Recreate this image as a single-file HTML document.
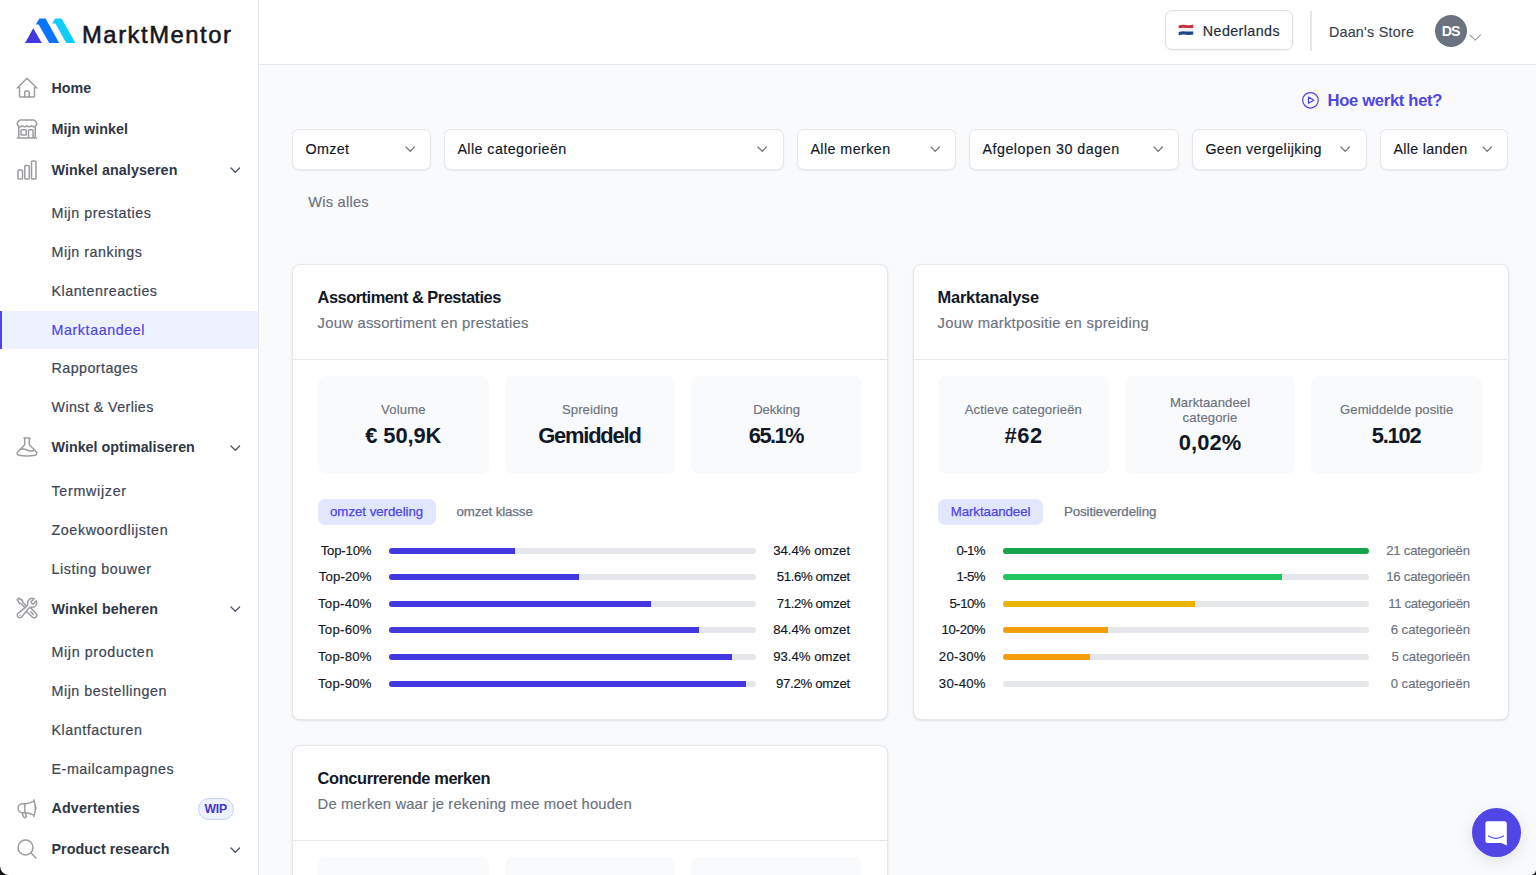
<!DOCTYPE html>
<html><head><meta charset="utf-8"><title>MarktMentor</title>
<style>
html,body{margin:0;padding:0}
body{width:1536px;height:875px;overflow:hidden;position:relative;background:#f9fafb;font-family:'Liberation Sans',sans-serif;}
.t{position:absolute;line-height:1;white-space:nowrap}
.t.n{-webkit-text-stroke-width:0.15px}
.r{position:absolute;box-sizing:border-box}
</style></head><body>

<div class="r" style="left:0px;top:0px;width:259px;height:875px;background:#fff;border-right:1px solid #e5e7eb"></div>
<svg class="r" style="left:20px;top:14px" width="62" height="34" viewBox="20 14 62 34">
<polygon points="25,43 33.3,28.3 41.8,43" fill="#4338e0"/>
<polygon points="39.3,18.6 45.6,18.6 59.2,43 49.2,43 38.6,24.6 35.8,24.6" fill="#0b74ff"/>
<polygon points="55.1,18.6 61.6,18.6 75.4,43 66.2,43 55.4,23.6 52.2,23.6" fill="#0fcdfd"/>
</svg>
<div class="t" style="left:82.00px;top:22.77px;font-size:23.8px;color:#15171c;letter-spacing:1.542px;-webkit-text-stroke:0.55px #15171c;">MarktMentor</div>
<svg class="r" style="left:14.7px;top:76px" width="24" height="24" viewBox="0 0 24 24" fill="none" stroke="#9b9ca1" stroke-width="1.5" stroke-linecap="round" stroke-linejoin="round"><path d="m2.25 12 8.954-8.955c.44-.439 1.152-.439 1.591 0L21.75 12M4.5 9.75v10.125c0 .621.504 1.125 1.125 1.125H9.75v-4.875c0-.621.504-1.125 1.125-1.125h2.25c.621 0 1.125.504 1.125 1.125V21h4.125c.621 0 1.125-.504 1.125-1.125V9.75M8.25 21h8.25"/></svg>
<div class="t" style="left:51.50px;top:80.64px;font-size:14.3px;color:#2f3745;font-weight:700;letter-spacing:-0.006px;">Home</div>
<svg class="r" style="left:14.7px;top:116.5px" width="24" height="24" viewBox="0 0 24 24" fill="none" stroke="#9b9ca1" stroke-width="1.5" stroke-linecap="round" stroke-linejoin="round"><path d="M13.5 21v-7.5a.75.75 0 0 1 .75-.75h3a.75.75 0 0 1 .75.75V21m-4.5 0H2.36m11.14 0H18m0 0h3.64m-1.39 0V9.349M3.75 21V9.349m0 0a3.001 3.001 0 0 0 3.75-.615A2.993 2.993 0 0 0 9.75 9.75c.896 0 1.7-.393 2.25-1.016a2.993 2.993 0 0 0 2.25 1.016c.896 0 1.7-.393 2.25-1.015a3.001 3.001 0 0 0 3.75.614m-16.5 0a3.004 3.004 0 0 1-.621-4.72l1.189-1.19A1.5 1.5 0 0 1 5.378 3h13.243a1.5 1.5 0 0 1 1.06.44l1.19 1.189a3 3 0 0 1-.621 4.72M6.75 18h3.75a.75.75 0 0 0 .75-.75V13.5a.75.75 0 0 0-.75-.75H6.75a.75.75 0 0 0-.75.75v3.75c0 .414.336.75.75.75Z"/></svg>
<div class="t" style="left:51.50px;top:121.84px;font-size:14.3px;color:#2f3745;font-weight:700;letter-spacing:0.011px;">Mijn winkel</div>
<svg class="r" style="left:14.7px;top:157.5px" width="24" height="24" viewBox="0 0 24 24" fill="none" stroke="#9b9ca1" stroke-width="1.5" stroke-linecap="round" stroke-linejoin="round"><path d="M3 13.125C3 12.504 3.504 12 4.125 12h2.25c.621 0 1.125.504 1.125 1.125v6.75C7.5 20.496 6.996 21 6.375 21h-2.25A1.125 1.125 0 0 1 3 19.875v-6.75ZM9.75 8.625c0-.621.504-1.125 1.125-1.125h2.25c.621 0 1.125.504 1.125 1.125v11.25c0 .621-.504 1.125-1.125 1.125h-2.25a1.125 1.125 0 0 1-1.125-1.125V8.625ZM16.5 4.125c0-.621.504-1.125 1.125-1.125h2.25C20.496 3 21 3.504 21 4.125v15.75c0 .621-.504 1.125-1.125 1.125h-2.25a1.125 1.125 0 0 1-1.125-1.125V4.125Z"/></svg>
<div class="t" style="left:51.50px;top:162.54px;font-size:14.3px;color:#2f3745;font-weight:700;letter-spacing:0.077px;">Winkel analyseren</div>
<svg class="r" style="left:229.45px;top:166.15px" width="12.6" height="8.3" viewBox="-2 -2 12.6 8.3" fill="none" stroke="#4b5563" stroke-width="1.3" stroke-linecap="round" stroke-linejoin="round"><path d="M0 0 L4.3 4.3 L8.6 0"/></svg>
<svg class="r" style="left:14.7px;top:435px" width="24" height="24" viewBox="0 0 24 24" fill="none" stroke="#9b9ca1" stroke-width="1.5" stroke-linecap="round" stroke-linejoin="round"><path d="M9.75 3.104v5.714a2.25 2.25 0 0 1-.659 1.591L5 14.5M9.75 3.104c-.251.023-.501.05-.75.082m.75-.082a24.301 24.301 0 0 1 4.5 0m0 0v5.714c0 .597.237 1.17.659 1.591L19.8 15.3M14.25 3.104c.251.023.501.05.75.082M19.8 15.3l-1.57.393A9.065 9.065 0 0 1 12 15a9.065 9.065 0 0 0-6.23-.693L5 14.5m14.8.8 1.402 1.402c1.232 1.232.65 3.318-1.067 3.611A48.309 48.309 0 0 1 12 21c-2.773 0-5.491-.235-8.135-.687-1.718-.293-2.3-2.379-1.067-3.61L5 14.5"/></svg>
<div class="t" style="left:51.50px;top:439.85px;font-size:14.3px;color:#2f3745;font-weight:700;letter-spacing:0.025px;">Winkel optimaliseren</div>
<svg class="r" style="left:229.45px;top:443.75px" width="12.6" height="8.3" viewBox="-2 -2 12.6 8.3" fill="none" stroke="#4b5563" stroke-width="1.3" stroke-linecap="round" stroke-linejoin="round"><path d="M0 0 L4.3 4.3 L8.6 0"/></svg>
<svg class="r" style="left:14.7px;top:595.5px" width="24" height="24" viewBox="0 0 24 24" fill="none" stroke="#9b9ca1" stroke-width="1.5" stroke-linecap="round" stroke-linejoin="round"><path d="M11.42 15.17 17.25 21A2.652 2.652 0 0 0 21 17.25l-5.877-5.877M11.42 15.17l2.496-3.03c.317-.384.74-.626 1.208-.766M11.42 15.17l-4.655 5.653a2.548 2.548 0 1 1-3.586-3.586l6.837-5.63m5.108-.233c.55-.164 1.163-.188 1.743-.14a4.5 4.5 0 0 0 4.486-6.336l-3.276 3.277a3.004 3.004 0 0 1-2.25-2.25l3.276-3.276a4.5 4.5 0 0 0-6.336 4.486c.091 1.076-.071 2.264-.904 2.95l-.102.085m-1.745 1.437L5.909 7.5H4.5L2.25 3.75l1.5-1.5L7.5 4.5v1.409l4.26 4.26m-1.745 1.437 1.745-1.437m6.615 8.206L15.75 15.75M4.867 19.125h.008v.008h-.008v-.008Z"/></svg>
<div class="t" style="left:51.50px;top:601.75px;font-size:14.3px;color:#2f3745;font-weight:700;letter-spacing:0.072px;">Winkel beheren</div>
<svg class="r" style="left:229.45px;top:604.95px" width="12.6" height="8.3" viewBox="-2 -2 12.6 8.3" fill="none" stroke="#4b5563" stroke-width="1.3" stroke-linecap="round" stroke-linejoin="round"><path d="M0 0 L4.3 4.3 L8.6 0"/></svg>
<svg class="r" style="left:14.7px;top:797px" width="24" height="24" viewBox="0 0 24 24" fill="none" stroke="#9b9ca1" stroke-width="1.5" stroke-linecap="round" stroke-linejoin="round"><path d="M10.34 15.84c-.688-.06-1.386-.09-2.09-.09H7.5a4.5 4.5 0 1 1 0-9h.75c.704 0 1.402-.03 2.09-.09m0 9.18c.253.962.584 1.892.985 2.783.247.55.06 1.21-.463 1.511l-.657.38c-.551.318-1.26.117-1.527-.461a20.845 20.845 0 0 1-1.44-4.282m3.102.069a18.03 18.03 0 0 1-.59-4.59c0-1.586.205-3.124.59-4.59m0 9.18a23.848 23.848 0 0 1 8.835 2.535M10.34 6.66a23.847 23.847 0 0 0 8.835-2.535m0 0A23.74 23.74 0 0 0 18.795 3m.38 1.125a23.91 23.91 0 0 1 1.014 5.395m-1.014 8.855c-.118.38-.245.754-.38 1.125m.38-1.125a23.91 23.91 0 0 0 1.014-5.395m0-3.46c.495.413.811 1.035.811 1.73 0 .695-.316 1.317-.811 1.73m0-3.46a24.347 24.347 0 0 1 0 3.46"/></svg>
<div class="t" style="left:51.50px;top:801.14px;font-size:14.3px;color:#2f3745;font-weight:700;letter-spacing:0.134px;">Advertenties</div>
<div class="r" style="left:198px;top:798px;width:36px;height:22px;background:#eef2ff;border:1px solid #c7d2fe;border-radius:11px"></div>
<div class="t" style="left:204.40px;top:802.53px;font-size:12.2px;color:#4338ca;font-weight:700;letter-spacing:-0.114px;">WIP</div>
<svg class="r" style="left:14.7px;top:837.3px" width="24" height="24" viewBox="0 0 24 24" fill="none" stroke="#9b9ca1" stroke-width="1.5" stroke-linecap="round" stroke-linejoin="round"><path d="m21 21-5.197-5.197m0 0A7.5 7.5 0 1 0 5.196 5.196a7.5 7.5 0 0 0 10.607 10.607Z"/></svg>
<div class="t" style="left:51.50px;top:842.05px;font-size:14.3px;color:#2f3745;font-weight:700;letter-spacing:0.025px;">Product research</div>
<svg class="r" style="left:229.45px;top:845.85px" width="12.6" height="8.3" viewBox="-2 -2 12.6 8.3" fill="none" stroke="#4b5563" stroke-width="1.3" stroke-linecap="round" stroke-linejoin="round"><path d="M0 0 L4.3 4.3 L8.6 0"/></svg>
<div class="r" style="left:0px;top:310.5px;width:258px;height:38.5px;background:#eef2ff"></div>
<div class="r" style="left:0px;top:310.5px;width:2px;height:38.5px;background:#4f46e5"></div>
<div class="t" style="left:51.50px;top:206.44px;font-size:14.3px;color:#3d4654;letter-spacing:0.514px;-webkit-text-stroke:0.2px #3d4654;">Mijn prestaties</div>
<div class="t" style="left:51.50px;top:245.04px;font-size:14.3px;color:#3d4654;letter-spacing:0.520px;-webkit-text-stroke:0.2px #3d4654;">Mijn rankings</div>
<div class="t" style="left:51.50px;top:283.85px;font-size:14.3px;color:#3d4654;letter-spacing:0.496px;-webkit-text-stroke:0.2px #3d4654;">Klantenreacties</div>
<div class="t" style="left:51.50px;top:322.75px;font-size:14.3px;color:#4f46e5;letter-spacing:0.577px;-webkit-text-stroke:0.2px #4f46e5;">Marktaandeel</div>
<div class="t" style="left:51.50px;top:361.45px;font-size:14.3px;color:#3d4654;letter-spacing:0.440px;-webkit-text-stroke:0.2px #3d4654;">Rapportages</div>
<div class="t" style="left:51.50px;top:399.85px;font-size:14.3px;color:#3d4654;letter-spacing:0.409px;-webkit-text-stroke:0.2px #3d4654;">Winst &amp; Verlies</div>
<div class="t" style="left:51.50px;top:483.75px;font-size:14.3px;color:#3d4654;letter-spacing:0.698px;-webkit-text-stroke:0.2px #3d4654;">Termwijzer</div>
<div class="t" style="left:51.50px;top:522.85px;font-size:14.3px;color:#3d4654;letter-spacing:0.588px;-webkit-text-stroke:0.2px #3d4654;">Zoekwoordlijsten</div>
<div class="t" style="left:51.50px;top:561.95px;font-size:14.3px;color:#3d4654;letter-spacing:0.554px;-webkit-text-stroke:0.2px #3d4654;">Listing bouwer</div>
<div class="t" style="left:51.50px;top:645.45px;font-size:14.3px;color:#3d4654;letter-spacing:0.622px;-webkit-text-stroke:0.2px #3d4654;">Mijn producten</div>
<div class="t" style="left:51.50px;top:684.25px;font-size:14.3px;color:#3d4654;letter-spacing:0.529px;-webkit-text-stroke:0.2px #3d4654;">Mijn bestellingen</div>
<div class="t" style="left:51.50px;top:723.14px;font-size:14.3px;color:#3d4654;letter-spacing:0.520px;-webkit-text-stroke:0.2px #3d4654;">Klantfacturen</div>
<div class="t" style="left:51.50px;top:761.85px;font-size:14.3px;color:#3d4654;letter-spacing:0.547px;-webkit-text-stroke:0.2px #3d4654;">E-mailcampagnes</div>
<div class="r" style="left:259px;top:0px;width:1277px;height:65px;background:#fff;border-bottom:1px solid #e5e7eb"></div>
<div class="r" style="left:1165px;top:10.3px;width:128.3px;height:40px;background:#fff;border:1px solid #dcdfe4;border-radius:7px;box-shadow:0 1px 2px rgba(0,0,0,.05)"></div>
<svg class="r" style="left:1178px;top:24px" width="16" height="12" viewBox="0 0 16 12">
<path d="M0.7 1.6 Q4 0.2 8 1 T15.3 0.6 V4 Q12 4.6 8 4 T0.7 4.6Z" fill="#c8313e"/>
<path d="M0.7 4.6 Q4 3.6 8 4 T15.3 4 V7.4 Q12 8 8 7.4 T0.7 8Z" fill="#f4f4f4"/>
<path d="M0.7 8 Q4 7 8 7.4 T15.3 7.4 V10.6 Q12 11.4 8 10.8 T0.7 11.4Z" fill="#21468b"/>
</svg>
<div class="t n" style="left:1202.80px;top:23.64px;font-size:14.3px;color:#1f2937;letter-spacing:0.406px;">Nederlands</div>
<div class="r" style="left:1310px;top:10.5px;width:2px;height:40px;background:#e5e7eb"></div>
<div class="t n" style="left:1328.90px;top:25.45px;font-size:14.3px;color:#374151;letter-spacing:0.252px;">Daan's Store</div>
<div class="r" style="left:1435.4px;top:14.5px;width:32px;height:32px;background:#6b7280;border-radius:50%"></div>
<div class="t" style="left:1441.70px;top:23.93px;font-size:14.2px;color:#fff;font-weight:700;letter-spacing:-1.038px;">DS</div>
<svg class="r" style="left:1468.35px;top:32.8px" width="14.5" height="9.2" viewBox="-2 -2 14.5 9.2" fill="none" stroke="#9ca3af" stroke-width="1.1" stroke-linecap="round" stroke-linejoin="round"><path d="M0 0 L5.25 5.2 L10.5 0"/></svg>
<svg class="r" style="left:1300px;top:90px" width="22" height="22" viewBox="0 0 22 22" fill="none" stroke="#4f46e5" stroke-width="1.25" stroke-linecap="round" stroke-linejoin="round"><circle cx="10.45" cy="10.3" r="7.8"/><path d="M8.5 7.1V13.3L13.9 10.2Z"/></svg>
<div class="t" style="left:1327.50px;top:92.59px;font-size:16.6px;color:#4f46e5;font-weight:700;letter-spacing:-0.306px;">Hoe werkt het?</div>
<div class="r" style="left:292px;top:129px;width:139px;height:41px;background:#fff;border:1px solid #e5e7eb;border-radius:7px;box-shadow:0 1px 2px rgba(0,0,0,.06)"></div>
<div class="t n" style="left:305.40px;top:141.84px;font-size:14.3px;color:#111827;letter-spacing:0.372px;">Omzet</div>
<svg class="r" style="left:403.5px;top:145.04999999999998px" width="12.4" height="8.3" viewBox="-2 -2 12.4 8.3" fill="none" stroke="#6b7280" stroke-width="1.2" stroke-linecap="round" stroke-linejoin="round"><path d="M0 0 L4.2 4.3 L8.4 0"/></svg>
<div class="r" style="left:444px;top:129px;width:340px;height:41px;background:#fff;border:1px solid #e5e7eb;border-radius:7px;box-shadow:0 1px 2px rgba(0,0,0,.06)"></div>
<div class="t n" style="left:457.40px;top:141.84px;font-size:14.3px;color:#111827;letter-spacing:0.422px;">Alle categorieën</div>
<svg class="r" style="left:756.0999999999999px;top:145.04999999999998px" width="12.4" height="8.3" viewBox="-2 -2 12.4 8.3" fill="none" stroke="#6b7280" stroke-width="1.2" stroke-linecap="round" stroke-linejoin="round"><path d="M0 0 L4.2 4.3 L8.4 0"/></svg>
<div class="r" style="left:797px;top:129px;width:159px;height:41px;background:#fff;border:1px solid #e5e7eb;border-radius:7px;box-shadow:0 1px 2px rgba(0,0,0,.06)"></div>
<div class="t n" style="left:810.40px;top:141.84px;font-size:14.3px;color:#111827;letter-spacing:0.430px;">Alle merken</div>
<svg class="r" style="left:928.8px;top:145.04999999999998px" width="12.4" height="8.3" viewBox="-2 -2 12.4 8.3" fill="none" stroke="#6b7280" stroke-width="1.2" stroke-linecap="round" stroke-linejoin="round"><path d="M0 0 L4.2 4.3 L8.4 0"/></svg>
<div class="r" style="left:969px;top:129px;width:210px;height:41px;background:#fff;border:1px solid #e5e7eb;border-radius:7px;box-shadow:0 1px 2px rgba(0,0,0,.06)"></div>
<div class="t n" style="left:982.40px;top:141.84px;font-size:14.3px;color:#111827;letter-spacing:0.516px;">Afgelopen 30 dagen</div>
<svg class="r" style="left:1151.8px;top:145.04999999999998px" width="12.4" height="8.3" viewBox="-2 -2 12.4 8.3" fill="none" stroke="#6b7280" stroke-width="1.2" stroke-linecap="round" stroke-linejoin="round"><path d="M0 0 L4.2 4.3 L8.4 0"/></svg>
<div class="r" style="left:1192px;top:129px;width:175px;height:41px;background:#fff;border:1px solid #e5e7eb;border-radius:7px;box-shadow:0 1px 2px rgba(0,0,0,.06)"></div>
<div class="t n" style="left:1205.40px;top:141.84px;font-size:14.3px;color:#111827;letter-spacing:0.350px;">Geen vergelijking</div>
<svg class="r" style="left:1339.3px;top:145.04999999999998px" width="12.4" height="8.3" viewBox="-2 -2 12.4 8.3" fill="none" stroke="#6b7280" stroke-width="1.2" stroke-linecap="round" stroke-linejoin="round"><path d="M0 0 L4.2 4.3 L8.4 0"/></svg>
<div class="r" style="left:1380px;top:129px;width:128px;height:41px;background:#fff;border:1px solid #e5e7eb;border-radius:7px;box-shadow:0 1px 2px rgba(0,0,0,.06)"></div>
<div class="t n" style="left:1393.40px;top:141.84px;font-size:14.3px;color:#111827;letter-spacing:0.305px;">Alle landen</div>
<svg class="r" style="left:1480.8px;top:145.04999999999998px" width="12.4" height="8.3" viewBox="-2 -2 12.4 8.3" fill="none" stroke="#6b7280" stroke-width="1.2" stroke-linecap="round" stroke-linejoin="round"><path d="M0 0 L4.2 4.3 L8.4 0"/></svg>
<div class="t n" style="left:308.30px;top:194.79px;font-size:14.6px;color:#6b7280;letter-spacing:0.237px;">Wis alles</div>
<div class="r" style="left:292px;top:264px;width:596px;height:456px;background:#fff;border:1px solid #e5e7eb;border-radius:8px;box-shadow:0 1px 3px 0 rgba(0,0,0,.08),0 1px 2px -1px rgba(0,0,0,.08)"></div>
<div class="t" style="left:317.60px;top:288.76px;font-size:16.4px;color:#111827;font-weight:700;letter-spacing:-0.489px;">Assortiment &amp; Prestaties</div>
<div class="t n" style="left:317.60px;top:315.92px;font-size:14.8px;color:#6b7280;letter-spacing:0.234px;">Jouw assortiment en prestaties</div>
<div class="r" style="left:293px;top:359px;width:594px;height:1px;background:#e5e7eb"></div>
<div class="r" style="left:318px;top:376px;width:170.67px;height:98px;background:#f9fafb;border-radius:8px"></div>
<div class="t" style="left:381.08px;top:403.37px;font-size:13.1px;color:#6b7280;letter-spacing:0.162px;-webkit-text-stroke:0.15px #6b7280;">Volume</div>
<div class="t" style="left:365.20px;top:424.78px;font-size:21.9px;color:#111827;font-weight:700;letter-spacing:-0.076px;">€ 50,9K</div>
<div class="r" style="left:504.67px;top:376px;width:170.67px;height:98px;background:#f9fafb;border-radius:8px"></div>
<div class="t" style="left:562.00px;top:403.37px;font-size:13.1px;color:#6b7280;letter-spacing:0.082px;-webkit-text-stroke:0.15px #6b7280;">Spreiding</div>
<div class="t" style="left:538.15px;top:424.78px;font-size:21.9px;color:#111827;font-weight:700;letter-spacing:-1.184px;">Gemiddeld</div>
<div class="r" style="left:691.33px;top:376px;width:170.67px;height:98px;background:#f9fafb;border-radius:8px"></div>
<div class="t" style="left:753.21px;top:403.37px;font-size:13.1px;color:#6b7280;letter-spacing:-0.071px;-webkit-text-stroke:0.15px #6b7280;">Dekking</div>
<div class="t" style="left:748.86px;top:424.78px;font-size:21.9px;color:#111827;font-weight:700;letter-spacing:-1.622px;">65.1%</div>
<div class="r" style="left:318px;top:499px;width:118px;height:26px;background:#e0e7ff;border-radius:7px"></div>
<div class="t" style="left:330.00px;top:504.80px;font-size:13.3px;color:#4f46e5;letter-spacing:-0.043px;-webkit-text-stroke:0.25px #4f46e5;">omzet verdeling</div>
<div class="t" style="left:456.60px;top:504.80px;font-size:13.3px;color:#6b7280;letter-spacing:-0.128px;-webkit-text-stroke:0.25px #6b7280;">omzet klasse</div>
<div class="t n" style="left:320.70px;top:543.78px;font-size:13.2px;color:#111827;letter-spacing:-0.201px;">Top-10%</div>
<div class="r" style="left:389px;top:547.8px;width:367.4px;height:6px;background:#e5e7eb;border-radius:3px"></div>
<div class="r" style="left:389px;top:547.8px;width:126.39px;height:6px;background:#4338e0;border-radius:3px 0 0 3px"></div>
<div class="t n" style="left:773.20px;top:543.78px;font-size:13.2px;color:#111827;letter-spacing:-0.006px;">34.4% omzet</div>
<div class="t n" style="left:318.80px;top:570.33px;font-size:13.2px;color:#111827;letter-spacing:0.116px;">Top-20%</div>
<div class="r" style="left:389px;top:574.35px;width:367.4px;height:6px;background:#e5e7eb;border-radius:3px"></div>
<div class="r" style="left:389px;top:574.35px;width:189.58px;height:6px;background:#4338e0;border-radius:3px 0 0 3px"></div>
<div class="t n" style="left:776.70px;top:570.33px;font-size:13.2px;color:#111827;letter-spacing:-0.356px;">51.6% omzet</div>
<div class="t n" style="left:318.00px;top:596.88px;font-size:13.2px;color:#111827;letter-spacing:0.249px;">Top-40%</div>
<div class="r" style="left:389px;top:600.9px;width:367.4px;height:6px;background:#e5e7eb;border-radius:3px"></div>
<div class="r" style="left:389px;top:600.9px;width:261.59px;height:6px;background:#4338e0;border-radius:3px 0 0 3px"></div>
<div class="t n" style="left:776.70px;top:596.88px;font-size:13.2px;color:#111827;letter-spacing:-0.356px;">71.2% omzet</div>
<div class="t n" style="left:318.00px;top:623.43px;font-size:13.2px;color:#111827;letter-spacing:0.249px;">Top-60%</div>
<div class="r" style="left:389px;top:627.45px;width:367.4px;height:6px;background:#e5e7eb;border-radius:3px"></div>
<div class="r" style="left:389px;top:627.45px;width:310.09px;height:6px;background:#4338e0;border-radius:3px 0 0 3px"></div>
<div class="t n" style="left:773.20px;top:623.43px;font-size:13.2px;color:#111827;letter-spacing:-0.006px;">84.4% omzet</div>
<div class="t n" style="left:318.00px;top:649.98px;font-size:13.2px;color:#111827;letter-spacing:0.249px;">Top-80%</div>
<div class="r" style="left:389px;top:654.0px;width:367.4px;height:6px;background:#e5e7eb;border-radius:3px"></div>
<div class="r" style="left:389px;top:654.0px;width:343.15px;height:6px;background:#4338e0;border-radius:3px 0 0 3px"></div>
<div class="t n" style="left:773.20px;top:649.98px;font-size:13.2px;color:#111827;letter-spacing:-0.006px;">93.4% omzet</div>
<div class="t n" style="left:318.00px;top:676.53px;font-size:13.2px;color:#111827;letter-spacing:0.249px;">Top-90%</div>
<div class="r" style="left:389px;top:680.55px;width:367.4px;height:6px;background:#e5e7eb;border-radius:3px"></div>
<div class="r" style="left:389px;top:680.55px;width:357.11px;height:6px;background:#4338e0;border-radius:3px 0 0 3px"></div>
<div class="t n" style="left:775.90px;top:676.53px;font-size:13.2px;color:#111827;letter-spacing:-0.276px;">97.2% omzet</div>
<div class="r" style="left:912.5px;top:264px;width:596px;height:456px;background:#fff;border:1px solid #e5e7eb;border-radius:8px;box-shadow:0 1px 3px 0 rgba(0,0,0,.08),0 1px 2px -1px rgba(0,0,0,.08)"></div>
<div class="t" style="left:937.60px;top:288.76px;font-size:16.4px;color:#111827;font-weight:700;letter-spacing:-0.212px;">Marktanalyse</div>
<div class="t n" style="left:937.60px;top:315.92px;font-size:14.8px;color:#6b7280;letter-spacing:0.276px;">Jouw marktpositie en spreiding</div>
<div class="r" style="left:913px;top:359px;width:594px;height:1px;background:#e5e7eb"></div>
<div class="r" style="left:938px;top:376px;width:170.67px;height:98px;background:#f9fafb;border-radius:8px"></div>
<div class="r" style="left:1124.67px;top:376px;width:170.67px;height:98px;background:#f9fafb;border-radius:8px"></div>
<div class="r" style="left:1311.33px;top:376px;width:170.67px;height:98px;background:#f9fafb;border-radius:8px"></div>
<div class="t" style="left:964.73px;top:403.37px;font-size:13.1px;color:#6b7280;letter-spacing:0.119px;-webkit-text-stroke:0.15px #6b7280;">Actieve categorieën</div>
<div class="t" style="left:1004.48px;top:424.78px;font-size:21.9px;color:#111827;font-weight:700;letter-spacing:0.591px;">#62</div>
<div class="t" style="left:1169.90px;top:395.67px;font-size:13.1px;color:#6b7280;letter-spacing:0.074px;-webkit-text-stroke:0.15px #6b7280;">Marktaandeel</div>
<div class="t" style="left:1182.60px;top:410.87px;font-size:13.1px;color:#6b7280;letter-spacing:0.112px;-webkit-text-stroke:0.15px #6b7280;">categorie</div>
<div class="t" style="left:1178.80px;top:432.28px;font-size:21.9px;color:#111827;font-weight:700;letter-spacing:0.078px;">0,02%</div>
<div class="t" style="left:1340.06px;top:403.37px;font-size:13.1px;color:#6b7280;letter-spacing:0.063px;-webkit-text-stroke:0.15px #6b7280;">Gemiddelde positie</div>
<div class="t" style="left:1371.66px;top:424.78px;font-size:21.9px;color:#111827;font-weight:700;letter-spacing:-1.201px;">5.102</div>
<div class="r" style="left:938px;top:499px;width:105px;height:26px;background:#e0e7ff;border-radius:7px"></div>
<div class="t" style="left:950.70px;top:504.80px;font-size:13.3px;color:#4f46e5;letter-spacing:-0.073px;-webkit-text-stroke:0.25px #4f46e5;">Marktaandeel</div>
<div class="t" style="left:1063.90px;top:504.80px;font-size:13.3px;color:#6b7280;letter-spacing:-0.093px;-webkit-text-stroke:0.25px #6b7280;">Positieverdeling</div>
<div class="t n" style="left:956.60px;top:543.78px;font-size:13.2px;color:#111827;letter-spacing:-0.607px;">0-1%</div>
<div class="r" style="left:1003.1px;top:547.8px;width:365.8px;height:6px;background:#e5e7eb;border-radius:3px"></div>
<div class="r" style="left:1003.1px;top:547.8px;width:365.8px;height:6px;background:#16a34a;border-radius:3px"></div>
<div class="t n" style="left:1386.30px;top:543.78px;font-size:13.2px;color:#6b7280;letter-spacing:-0.273px;">21 categorieën</div>
<div class="t n" style="left:956.60px;top:570.33px;font-size:13.2px;color:#111827;letter-spacing:-0.607px;">1-5%</div>
<div class="r" style="left:1003.1px;top:574.35px;width:365.8px;height:6px;background:#e5e7eb;border-radius:3px"></div>
<div class="r" style="left:1003.1px;top:574.35px;width:278.7px;height:6px;background:#22c55e;border-radius:3px 0 0 3px"></div>
<div class="t n" style="left:1386.30px;top:570.33px;font-size:13.2px;color:#6b7280;letter-spacing:-0.273px;">16 categorieën</div>
<div class="t n" style="left:949.50px;top:596.88px;font-size:13.2px;color:#111827;letter-spacing:-0.512px;">5-10%</div>
<div class="r" style="left:1003.1px;top:600.9px;width:365.8px;height:6px;background:#e5e7eb;border-radius:3px"></div>
<div class="r" style="left:1003.1px;top:600.9px;width:191.61px;height:6px;background:#eab308;border-radius:3px 0 0 3px"></div>
<div class="t n" style="left:1388.30px;top:596.88px;font-size:13.2px;color:#6b7280;letter-spacing:-0.351px;">11 categorieën</div>
<div class="t n" style="left:941.50px;top:623.43px;font-size:13.2px;color:#111827;letter-spacing:-0.281px;">10-20%</div>
<div class="r" style="left:1003.1px;top:627.45px;width:365.8px;height:6px;background:#e5e7eb;border-radius:3px"></div>
<div class="r" style="left:1003.1px;top:627.45px;width:104.51px;height:6px;background:#f59e0b;border-radius:3px 0 0 3px"></div>
<div class="t n" style="left:1390.70px;top:623.43px;font-size:13.2px;color:#6b7280;letter-spacing:-0.049px;">6 categorieën</div>
<div class="t n" style="left:938.80px;top:649.98px;font-size:13.2px;color:#111827;letter-spacing:0.259px;">20-30%</div>
<div class="r" style="left:1003.1px;top:654.0px;width:365.8px;height:6px;background:#e5e7eb;border-radius:3px"></div>
<div class="r" style="left:1003.1px;top:654.0px;width:87.1px;height:6px;background:#f59e0b;border-radius:3px 0 0 3px"></div>
<div class="t n" style="left:1391.50px;top:649.98px;font-size:13.2px;color:#6b7280;letter-spacing:-0.116px;">5 categorieën</div>
<div class="t n" style="left:938.80px;top:676.53px;font-size:13.2px;color:#111827;letter-spacing:0.259px;">30-40%</div>
<div class="r" style="left:1003.1px;top:680.55px;width:365.8px;height:6px;background:#e5e7eb;border-radius:3px"></div>
<div class="t n" style="left:1390.70px;top:676.53px;font-size:13.2px;color:#6b7280;letter-spacing:-0.049px;">0 categorieën</div>
<div class="r" style="left:292px;top:745px;width:596px;height:200px;background:#fff;border:1px solid #e5e7eb;border-radius:8px;box-shadow:0 1px 3px 0 rgba(0,0,0,.08),0 1px 2px -1px rgba(0,0,0,.08)"></div>
<div class="t" style="left:317.60px;top:769.76px;font-size:16.4px;color:#111827;font-weight:700;letter-spacing:-0.389px;">Concurrerende merken</div>
<div class="t n" style="left:317.60px;top:796.92px;font-size:14.8px;color:#6b7280;letter-spacing:0.136px;">De merken waar je rekening mee moet houden</div>
<div class="r" style="left:293px;top:840px;width:594px;height:1px;background:#e5e7eb"></div>
<div class="r" style="left:318px;top:857px;width:170.67px;height:98px;background:#f9fafb;border-radius:8px"></div>
<div class="r" style="left:504.67px;top:857px;width:170.67px;height:98px;background:#f9fafb;border-radius:8px"></div>
<div class="r" style="left:691.33px;top:857px;width:170.67px;height:98px;background:#f9fafb;border-radius:8px"></div>
<div class="r" style="left:1472px;top:808px;width:49px;height:49px;background:#4f46e5;border-radius:50%;box-shadow:0 4px 16px rgba(0,0,0,.10)"></div>
<svg class="r" style="left:1485px;top:820.5px" width="23" height="25" viewBox="0 0 23 25">
<path d="M2.4 0.3 H19.7 Q21.8 0.3 21.8 2.4 V24.4 L16.2 22.1 H2.4 Q0.4 22.1 0.4 20 V2.4 Q0.4 0.3 2.4 0.3Z" fill="#fff"/>
<path d="M3.6 15 Q11 19.6 18.4 15" fill="none" stroke="#4f46e5" stroke-width="1.3" stroke-linecap="round"/>
</svg>
<svg class="r" style="left:0;top:866px" width="9" height="9" viewBox="0 0 9 9"><path d="M0 0 Q0.6 8.4 9 9 H0Z" fill="#111"/></svg>
<svg class="r" style="left:1531px;top:870px" width="5" height="5" viewBox="0 0 5 5"><path d="M5 0 Q4.6 4.6 0 5 H5Z" fill="#111"/></svg>
</body></html>
